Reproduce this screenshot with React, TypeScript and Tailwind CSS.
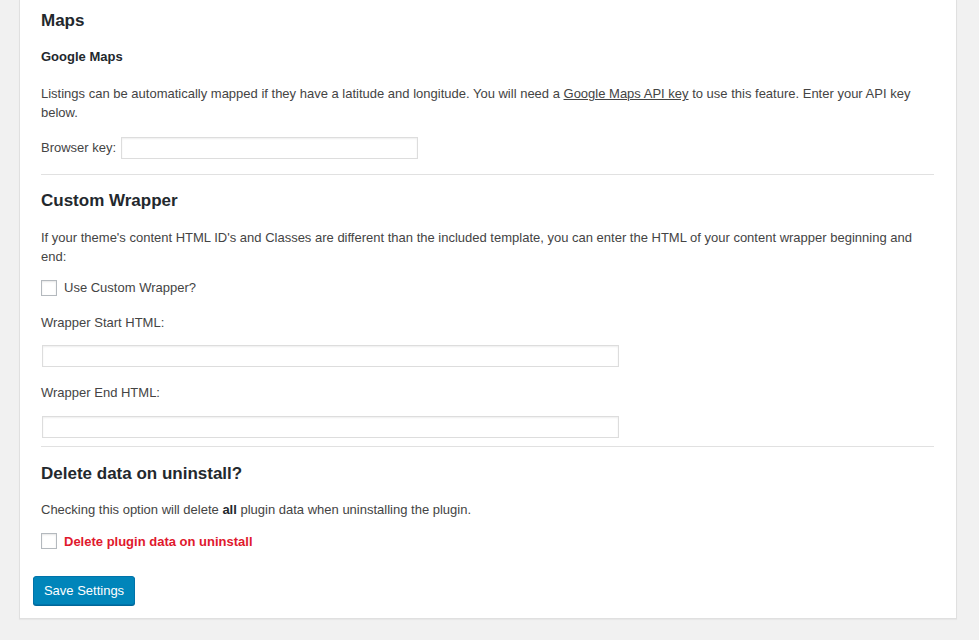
import React from "react";

const font = { fontFamily: '"Liberation Sans", Arial, Helvetica, sans-serif' };

function TextInput({ className }: { className: string }) {
  return (
    <input
      type="text"
      className={`h-[22px] border border-[#dddddd] bg-white shadow-[inset_0_1px_2px_rgba(0,0,0,0.07)] outline-none ${className}`}
    />
  );
}

function Checkbox() {
  return (
    <span className="inline-block h-4 w-4 shrink-0 border border-[#b4b9be] bg-white shadow-[inset_0_1px_2px_rgba(0,0,0,0.1)]" />
  );
}

function Divider({ className = "" }: { className?: string }) {
  return <div className={`h-px bg-[#e1e1e1] ${className}`} />;
}

export default function App() {
  return (
    <div className="min-h-[640px] bg-[#f1f1f1] text-[13px] text-[#444444]" style={font}>
      <div className="ml-[19px] w-[938px] border border-t-0 border-[#e0e0e0] bg-white pb-[13px] pl-[13px] pr-[22px] shadow-[0_1px_1px_rgba(0,0,0,0.04)]">
        <div className="pl-[8px] pt-[9px]">
          {/* Maps */}
          <h2 className="text-[17px] font-bold leading-[24px] text-[#23282d]">Maps</h2>
          <h3 className="mt-[15px] text-[13px] font-bold leading-[18px] text-[#23282d]">
            Google Maps
          </h3>
          <p className="mt-[19px] leading-[18.5px]">
            Listings can be automatically mapped if they have a latitude and longitude. You will
            need a <a className="underline">Google Maps API key</a> to use this feature. Enter your
            API key below.
          </p>
          <div className="mt-[15px] flex items-center gap-[5px]">
            <label>Browser key:</label>
            <TextInput className="w-[297px]" />
          </div>
          <Divider className="mt-[15px]" />

          {/* Custom Wrapper */}
          <h2 className="mt-[14px] text-[17px] font-bold leading-[24px] text-[#23282d]">
            Custom Wrapper
          </h2>
          <p className="mt-[15px] leading-[19px]">
            If your theme's content HTML ID's and Classes are different than the included template,
            you can enter the HTML of your content wrapper beginning and end:
          </p>
          <label className="mt-[12px] flex items-center gap-[7px]">
            <Checkbox />
            <span>Use Custom Wrapper?</span>
          </label>
          <p className="mt-[16px] leading-[18px]">Wrapper Start HTML:</p>
          <TextInput className="ml-px mt-[13px] block w-[577px]" />
          <p className="mt-[17px] leading-[18px]">Wrapper End HTML:</p>
          <TextInput className="ml-px mt-[14px] block w-[577px]" />
          <Divider className="mt-[8px]" />

          {/* Delete data */}
          <h2 className="mt-[15px] text-[17px] font-bold leading-[24px] text-[#23282d]">
            Delete data on uninstall?
          </h2>
          <p className="mt-[15px] leading-[18px]">
            Checking this option will delete <strong className="text-[#23282d]">all</strong> plugin
            data when uninstalling the plugin.
          </p>
          <label className="mt-[13px] flex items-center gap-[7px]">
            <Checkbox />
            <span className="font-bold text-[#e0182d]">Delete plugin data on uninstall</span>
          </label>
        </div>
        <button className="mt-[25px] h-[29px] w-[102px] rounded-[3px] border border-[#0073aa] bg-[#0085ba] text-[13px] text-white shadow-[0_1px_0_#006799]">
          Save Settings
        </button>
      </div>
    </div>
  );
}
